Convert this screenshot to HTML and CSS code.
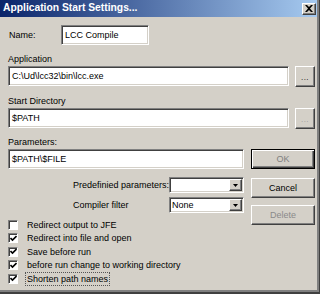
FILE: index.html
```html
<!DOCTYPE html>
<html>
<head>
<meta charset="utf-8">
<link rel="stylesheet" href="styles.css">
</head>
<body>
<div class="window">
  <div class="titlebar">
    <span class="title">Application Start Settings...</span>
    <span class="close"><svg width="8" height="7" viewBox="0 0 8 7"><path d="M0 0h2l2 2 2-2h2L5 3.5 8 7H6L4 5 2 7H0l3-3.5z" fill="#000"/></svg></span>
  </div>
  <div class="content">
    <div class="name-row">
      <span class="lbl name-lbl">Name:</span>
      <div class="field name-field">LCC Compile</div>
    </div>
    <div class="lbl cap">Application</div>
    <div class="path-row">
      <div class="field path-field">C:\Ud\lcc32\bin\lcc.exe</div>
      <div class="btn browse">...</div>
    </div>
    <div class="lbl cap">Start Directory</div>
    <div class="path-row">
      <div class="field path-field">$PATH</div>
      <div class="btn browse disabled">...</div>
    </div>
    <div class="lbl cap params-lbl">Parameters:</div>
    <div class="lower">
      <div class="left">
        <div class="field params-field">$PATH\$FILE</div>
        <div class="combo-row first">
          <span class="lbl combo-lbl">Predefinied parameters:</span>
          <div class="field combo"><span class="combo-text"></span><span class="arrow"><svg width="5" height="3" viewBox="0 0 5 3"><path d="M0 0h5L2.5 3z" fill="#000"/></svg></span></div>
        </div>
        <div class="combo-row">
          <span class="lbl combo-lbl">Compiler filter</span>
          <div class="field combo"><span class="combo-text">None</span><span class="arrow"><svg width="5" height="3" viewBox="0 0 5 3"><path d="M0 0h5L2.5 3z" fill="#000"/></svg></span></div>
        </div>
        <div class="checks">
          <div class="check"><span class="box"></span><span class="ctext">Redirect output to JFE</span></div>
          <div class="check"><span class="box on"><svg width="7" height="7" viewBox="0 0 7 7"><path d="M0.5 3l2 2 4-4" stroke="#000" stroke-width="1.6" fill="none"/></svg></span><span class="ctext">Redirect into file and open</span></div>
          <div class="check"><span class="box on"><svg width="7" height="7" viewBox="0 0 7 7"><path d="M0.5 3l2 2 4-4" stroke="#000" stroke-width="1.6" fill="none"/></svg></span><span class="ctext">Save before run</span></div>
          <div class="check"><span class="box on"><svg width="7" height="7" viewBox="0 0 7 7"><path d="M0.5 3l2 2 4-4" stroke="#000" stroke-width="1.6" fill="none"/></svg></span><span class="ctext">before run change to working directory</span></div>
          <div class="check"><span class="box on"><svg width="7" height="7" viewBox="0 0 7 7"><path d="M0.5 3l2 2 4-4" stroke="#000" stroke-width="1.6" fill="none"/></svg></span><span class="ctext focus">Shorten path names</span></div>
        </div>
      </div>
      <div class="right">
        <div class="btn push default">OK</div>
        <div class="btn push cancel">Cancel</div>
        <div class="btn push delete">Delete</div>
      </div>
    </div>
  </div>
</div>
</body>
</html>
```

FILE: styles.css
```css
html, body {
  margin: 0;
  padding: 0;
  background: #d4d0c8;
}
body {
  width: 320px;
  height: 294px;
  overflow: hidden;
  font-family: "Liberation Sans", Arial, sans-serif;
  font-size: 9px;
  color: #000;
}
.window {
  width: 320px;
  height: 294px;
  box-sizing: border-box;
  border-right: 1px solid #404040;
  border-bottom: 2px solid #404040;
  box-shadow: inset -2px -2px #808080;
  background: #d4d0c8;
  display: flex;
  flex-direction: column;
}
.titlebar {
  height: 17px;
  margin-right: 2px;
  background: linear-gradient(to right, #0a246a, #a6caf0);
  display: flex;
  align-items: center;
  justify-content: space-between;
  padding-left: 3px;
  padding-right: 1px;
}
.title {
  color: #fff;
  font-weight: bold;
  font-size: 10.3px;
  line-height: 12px;
  margin-top: -1px;
}
.close {
  width: 14px;
  height: 12px;
  box-sizing: border-box;
  background: #d4d0c8;
  border: 1px solid;
  border-color: #fff #404040 #404040 #fff;
  box-shadow: inset -1px -1px #808080;
  display: flex;
  align-items: center;
  justify-content: center;
}
.content {
  padding-left: 8px;
}
.lbl {
  white-space: nowrap;
}
.field {
  box-sizing: border-box;
  background: #fff;
  border: 1px solid;
  border-color: #808080 #fff #fff #808080;
  box-shadow: inset 1px 1px #404040, inset -1px -1px #d4d0c8;
  padding-left: 3px;
  display: flex;
  align-items: center;
  white-space: nowrap;
}
.name-row {
  margin-top: 8px;
  display: flex;
  align-items: center;
}
.name-lbl {
  width: 52px;
  padding-left: 1px;
}
.name-field {
  width: 88px;
  height: 20px;
}
.cap {
  margin-top: 8px;
  height: 13px;
  line-height: 13px;
}
.path-row {
  display: flex;
  height: 21px;
  gap: 6px;
  align-items: flex-start;
}
.path-field {
  width: 281px;
  height: 20px;
}
.btn {
  box-sizing: border-box;
  background: #d4d0c8;
  border: 1px solid;
  border-color: #fff #404040 #404040 #fff;
  box-shadow: inset -1px -1px #808080;
  display: flex;
  align-items: center;
  justify-content: center;
}
.browse {
  width: 20px;
  height: 21px;
  font-size: 8px;
  letter-spacing: 0.5px;
  padding-top: 2px;
}
.browse.disabled {
  color: #999;
}
.params-lbl {
  margin-top: 7px;
  height: 13px;
}
.lower {
  display: flex;
  gap: 7px;
}
.left {
  width: 236px;
  flex: none;
  display: flex;
  flex-direction: column;
}
.params-field {
  height: 20px;
}
.combo-row {
  display: flex;
  justify-content: flex-start;
  align-items: center;
  padding-left: 65px;
  margin-top: 4px;
}
.combo-row.first {
  margin-top: 8px;
}
.combo-lbl {
  flex: none;
  width: 96px;
  text-align: left;
  overflow: visible;
}
.combo {
  flex: none;
  width: 75px;
  height: 16px;
  padding-left: 2px;
  justify-content: space-between;
}
.arrow {
  width: 13px;
  height: 12px;
  margin-right: 1px;
  box-sizing: border-box;
  background: #d4d0c8;
  border: 1px solid;
  border-color: #fff #404040 #404040 #fff;
  box-shadow: inset -1px -1px #808080;
  display: flex;
  align-items: center;
  justify-content: center;
}
.checks {
  margin-top: 5px;
  display: flex;
  flex-direction: column;
}
.check {
  height: 13.5px;
  display: flex;
  align-items: center;
}
.box {
  width: 10px;
  height: 10px;
  box-sizing: border-box;
  background: #fff;
  border: 1px solid;
  border-color: #808080 #fff #fff #808080;
  box-shadow: inset 1px 1px #404040;
  display: flex;
  align-items: center;
  justify-content: center;
  margin-right: 7px;
}
.ctext {
  line-height: 12px;
  padding: 0 1px;
  border: 1px solid transparent;
}
.ctext.focus {
  border: 1px dotted #555;
}
.right {
  width: 64px;
  flex: none;
  display: flex;
  flex-direction: column;
}
.push {
  width: 64px;
  height: 20px;
  font-size: 9px;
}
.default {
  border: 1px solid #000;
  box-shadow: inset 1px 1px #fff, inset -1px -1px #404040, inset -2px -2px #808080;
  color: #808080;
}
.cancel {
  margin-top: 9px;
}
.delete {
  margin-top: 7px;
  color: #8a8a8a;
}
```
